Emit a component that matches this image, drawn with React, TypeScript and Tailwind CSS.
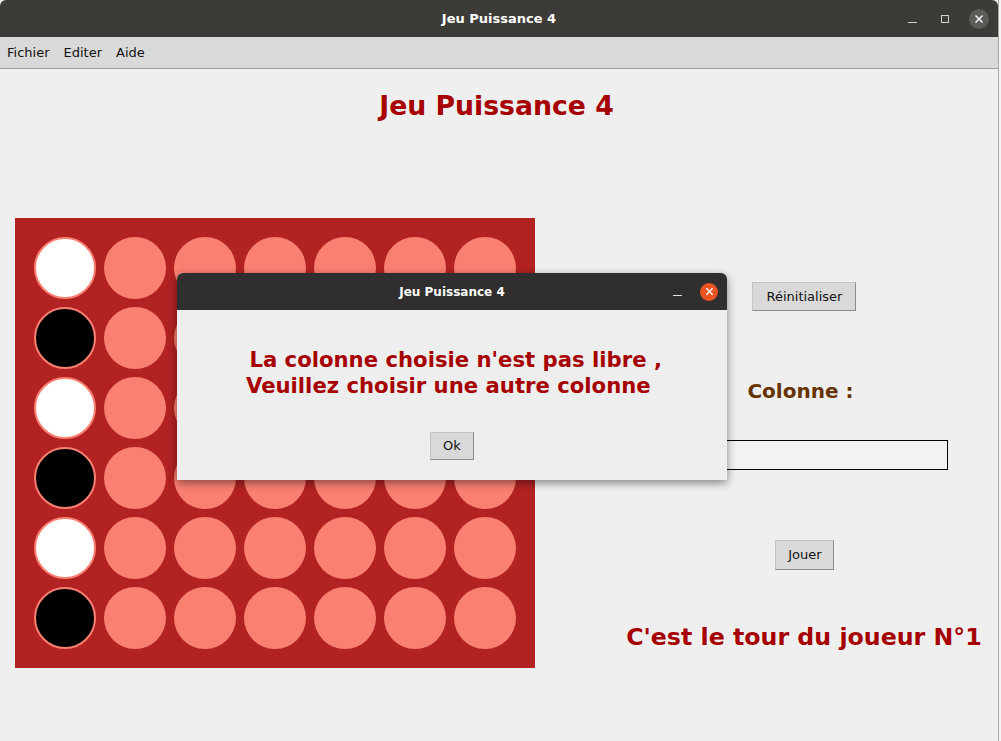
import React from "react";

const ROWS = 6;
const COLS = 7;

const board: string[][] = Array.from({ length: ROWS }, (_, r) =>
  Array.from({ length: COLS }, (_, c) =>
    c === 0 ? (r % 2 === 0 ? "white" : "black") : "empty"
  )
);

function Cell({ kind }: { kind: string }) {
  if (kind === "white")
    return <div className="w-[62px] h-[62px] rounded-full bg-white border-2 border-[#fa8072]" />;
  if (kind === "black")
    return <div className="w-[62px] h-[62px] rounded-full bg-black border-2 border-[#fa8072]" />;
  return <div className="w-[62px] h-[62px] rounded-full bg-[#fa8072]" />;
}

function TkButton({ label, className = "" }: { label: string; className?: string }) {
  return (
    <button
      className={
        "bg-[#d9d9d9] border border-[#c4c4c4] border-b-[#8a8a8a] border-r-[#8a8a8a] text-[13px] text-[#111] flex items-center justify-center " +
        className
      }
      style={{ fontFamily: "'DejaVu Sans', sans-serif" }}
    >
      {label}
    </button>
  );
}

export default function App() {
  const bold = { fontFamily: "'DejaVu Sans', sans-serif", fontWeight: 700 };
  return (
    <div className="w-[1001px] h-[741px] flex bg-[#efefef] overflow-hidden" style={{ fontFamily: "'DejaVu Sans', sans-serif" }}>
      <div className="relative w-[999px] h-full flex flex-col border-r border-[#a8a8a8]">
        {/* window title bar */}
        <div className="h-[37px] bg-[#3c3b37] rounded-t-[6px] flex items-center relative shrink-0">
          <div className="flex-1 text-center text-white text-[13px]" style={bold}>
            Jeu Puissance 4
          </div>
          <div className="absolute right-[9px] top-0 h-full flex items-center gap-[20px] text-[#cfcfcf]">
            <div className="w-[9px] h-[1px] bg-[#cfcfcf] mt-[8px]" />
            <div className="w-[8px] h-[8px] border border-[#cfcfcf] ml-[4px]" />
            <div className="w-[20px] h-[20px] rounded-full bg-[#5d5c58] flex items-center justify-center">
              <svg width="10" height="10" viewBox="0 0 10 10">
                <path d="M1.5 1.5 L8.5 8.5 M8.5 1.5 L1.5 8.5" stroke="#fff" strokeWidth="1.4" />
              </svg>
            </div>
          </div>
        </div>
        {/* menu */}
        <div className="h-[32px] bg-[#d9d9d9] border-b border-[#a0a0a0] flex items-center px-[7px] gap-[14px] text-[13px] text-[#111] shrink-0">
          <span>Fichier</span>
          <span>Editer</span>
          <span>Aide</span>
        </div>
        {/* content */}
        <div className="flex-1 flex flex-col">
          <div className="pt-[21px] text-center text-[26.7px] leading-[32px] text-[#a60000] pr-[5px]" style={bold}>
            Jeu Puissance 4
          </div>
          <div className="flex mt-[96px]">
            <div className="ml-[15px] w-[521px] h-[450px] bg-[#b22222] pl-[19px] pt-[19px] grid grid-cols-[repeat(7,62px)] gap-[8px] content-start">
              {board.flat().map((k, i) => (
                <Cell key={i} kind={k} />
              ))}
            </div>
            <div className="ml-[73px] w-[391px] flex flex-col items-center">
              <TkButton label="Réinitialiser" className="mt-[64px] w-[104px] h-[29px] ml-[3px]" />
              <div className="mt-[68px] text-[20px] leading-[24px] text-[#663300] pr-[5px]" style={bold}>
                Colonne :
              </div>
              <div className="mt-[37px] w-[287px] h-[30px] border border-black bg-[#f2f2f2] ml-[3px]" />
              <TkButton label="Jouer" className="mt-[70px] w-[59px] h-[30px] ml-[4px]" />
              <div className="mt-[53px] text-[23.7px] leading-[28px] text-[#a60000] whitespace-nowrap ml-[2px]" style={bold}>
                C'est le tour du joueur N°1
              </div>
            </div>
          </div>
        </div>

        {/* message dialog */}
        <div className="absolute left-[177px] top-[273px] w-[550px] h-[207px] flex flex-col rounded-t-[6px] shadow-[0_3px_10px_rgba(0,0,0,0.45)] bg-[#eeeeee]">
          <div className="h-[37px] bg-[#302e2e] rounded-t-[6px] flex items-center relative shrink-0">
            <div className="flex-1 text-center text-white text-[12px]" style={bold}>
              Jeu Puissance 4
            </div>
            <div className="absolute right-[9px] top-0 h-full flex items-center gap-[18px]">
              <div className="w-[9px] h-[1px] bg-[#e0e0e0] mt-[7px]" />
              <div className="w-[18px] h-[18px] rounded-full bg-[#e95420] flex items-center justify-center">
                <svg width="9" height="9" viewBox="0 0 10 10">
                  <path d="M1.5 1.5 L8.5 8.5 M8.5 1.5 L1.5 8.5" stroke="#fff" strokeWidth="1.5" />
                </svg>
              </div>
            </div>
          </div>
          <div className="flex-1 flex flex-col items-center">
            <div className="mt-[37px] text-[21.2px] leading-[26px] text-[#a60000] whitespace-pre text-center" style={bold}>
              {" La colonne choisie n'est pas libre ,\nVeuillez choisir une autre colonne "}
            </div>
            <TkButton label="Ok" className="mt-[33px] w-[44px] h-[28px]" />
          </div>
        </div>
      </div>
      <div className="flex-1 bg-[#f4f4f4]" />
    </div>
  );
}
